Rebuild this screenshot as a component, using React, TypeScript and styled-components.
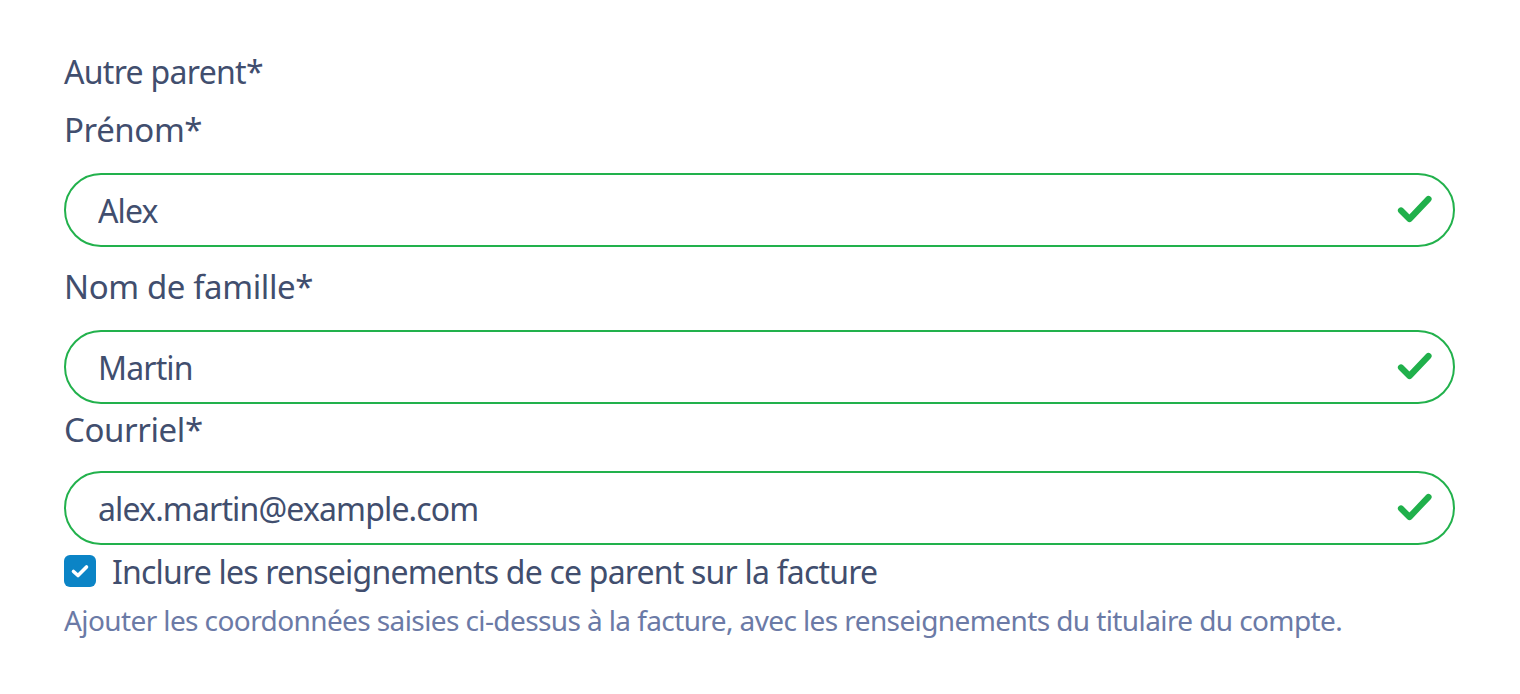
import React from "react";
import styled, { createGlobalStyle } from "styled-components";

const GlobalStyle = createGlobalStyle`
  html, body { margin: 0; padding: 0; background: #ffffff; }
  body { font-family: "Noto Sans", "Open Sans", sans-serif; color: #414e6e; }
  * { box-sizing: border-box; }
`;

const Form = styled.form`
  display: flex;
  flex-direction: column;
  padding: 52px 65px 0 64px;
`;

const SectionTitle = styled.div`
  font-size: 32px;
  line-height: 40px;
  letter-spacing: -0.7px;
  color: #414e6e;
`;

const Label = styled.label<{ $top: number }>`
  display: block;
  margin-top: ${(p) => p.$top}px;
  font-size: 33px;
  line-height: 40px;
  letter-spacing: -0.4px;
  color: #414e6e;
`;

const Field = styled.div<{ $top: number }>`
  display: flex;
  align-items: center;
  margin-top: ${(p) => p.$top}px;
  height: 74px;
  border: 2px solid #22b14c;
  border-radius: 37px;
  padding: 0 20px 0 32px;
`;

const Input = styled.input`
  flex: 1;
  min-width: 0;
  border: none;
  outline: none;
  background: transparent;
  font-family: inherit;
  font-size: 32px;
  letter-spacing: -0.85px;
  color: #414e6e;
  padding: 0;
`;

const CheckIcon = styled.svg`
  flex: none;
  width: 36px;
  height: 30px;
`;

const CheckRow = styled.label`
  display: flex;
  align-items: center;
  gap: 16px;
  margin-top: 10px;
  height: 32px;
  font-size: 32px;
  letter-spacing: -0.8px;
  color: #414e6e;
`;

const Box = styled.span`
  flex: none;
  width: 32px;
  height: 32px;
  border-radius: 6px;
  background: #0b84c6;
  display: flex;
  align-items: center;
  justify-content: center;
`;

const Help = styled.p`
  margin: 15px 0 0;
  font-size: 28px;
  line-height: 36px;
  letter-spacing: -0.6px;
  color: #6b7aa6;
`;

const ValidMark = () => (
  <CheckIcon viewBox="0 0 36 30" aria-hidden>
    <path
      d="M4 15.5 L12.5 24 L31.5 4"
      fill="none"
      stroke="#20b04b"
      strokeWidth="6.2"
      strokeLinecap="round"
      strokeLinejoin="round"
    />
  </CheckIcon>
);

export default function App() {
  return (
    <>
      <GlobalStyle />
      <Form onSubmit={(e) => e.preventDefault()}>
        <SectionTitle>Autre parent*</SectionTitle>
        <Label $top={18} htmlFor="prenom">Prénom*</Label>
        <Field $top={23}>
          <Input id="prenom" defaultValue="Alex" />
          <ValidMark />
        </Field>
        <Label $top={20} htmlFor="nom">Nom de famille*</Label>
        <Field $top={23}>
          <Input id="nom" defaultValue="Martin" />
          <ValidMark />
        </Field>
        <Label $top={6} htmlFor="courriel">Courriel*</Label>
        <Field $top={21}>
          <Input id="courriel" defaultValue="alex.martin@example.com" />
          <ValidMark />
        </Field>
        <CheckRow>
          <Box>
            <svg width="20" height="16" viewBox="0 0 20 16" aria-hidden>
              <path
                d="M3.5 8.5 L8 12.5 L16.5 4"
                fill="none"
                stroke="#ffffff"
                strokeWidth="3.6"
                strokeLinecap="round"
                strokeLinejoin="round"
              />
            </svg>
          </Box>
          Inclure les renseignements de ce parent sur la facture
        </CheckRow>
        <Help>
          Ajouter les coordonnées saisies ci-dessus à la facture, avec les renseignements du titulaire du compte.
        </Help>
      </Form>
    </>
  );
}
